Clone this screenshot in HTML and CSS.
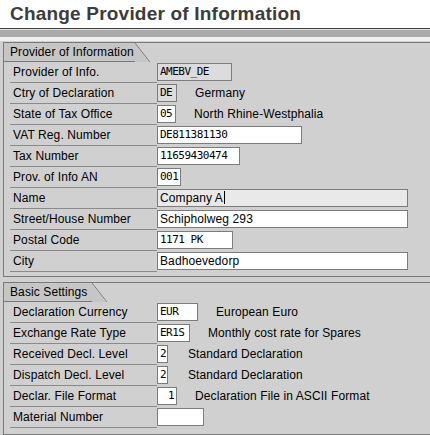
FILE: index.html
```html
<!DOCTYPE html>
<html lang="en">
<head>
  <meta charset="UTF-8">
  <title>Change Provider of Information</title>
  <link rel="stylesheet" href="styles.css">
</head>
<body>
  <div class="title">Change Provider of Information</div>
  <div class="toolbar"></div>
  <div class="screen">
    <div class="group">
      <div class="tab"><span class="tab-text t1">Provider of Information</span><span class="tab-slant"></span></div>
      <div class="row"><span class="lbl">Provider of Info.</span><span class="fld mono dis w75">AMEBV_DE</span></div>
      <div class="row"><span class="lbl">Ctry of Declaration</span><span class="fld mono dis w20">DE</span><span class="desc">Germany</span></div>
      <div class="row"><span class="lbl">State of Tax Office</span><span class="fld mono w19">05</span><span class="desc">North Rhine-Westphalia</span></div>
      <div class="row"><span class="lbl">VAT Reg. Number</span><span class="fld mono w145">DE811381130</span></div>
      <div class="row"><span class="lbl">Tax Number</span><span class="fld mono w83">11659430474</span></div>
      <div class="row"><span class="lbl">Prov. of Info AN</span><span class="fld mono w24">001</span></div>
      <div class="row"><span class="lbl">Name</span><span class="fld focus w251">Company A<span class="caret"></span></span></div>
      <div class="row"><span class="lbl">Street/House Number</span><span class="fld w251">Schipholweg 293</span></div>
      <div class="row"><span class="lbl">Postal Code</span><span class="fld mono w76">1171 PK</span></div>
      <div class="row"><span class="lbl">City</span><span class="fld w251">Badhoevedorp</span></div>
    </div>
    <div class="group second">
      <div class="tab"><span class="tab-text t2">Basic Settings</span><span class="tab-slant"></span></div>
      <div class="row"><span class="lbl">Declaration Currency</span><span class="fld mono w41">EUR</span><span class="desc">European Euro</span></div>
      <div class="row"><span class="lbl">Exchange Rate Type</span><span class="fld mono w33">ER1S</span><span class="desc">Monthly cost rate for Spares</span></div>
      <div class="row"><span class="lbl">Received Decl. Level</span><span class="fld mono w11">2</span><span class="desc wide">Standard Declaration</span></div>
      <div class="row"><span class="lbl">Dispatch Decl. Level</span><span class="fld mono w11">2</span><span class="desc wide">Standard Declaration</span></div>
      <div class="row"><span class="lbl">Declar. File Format</span><span class="fld mono w20 right">1</span><span class="desc">Declaration File in ASCII Format</span></div>
      <div class="row"><span class="lbl">Material Number</span><span class="fld mono w47"></span></div>
    </div>
  </div>
</body>
</html>
```

FILE: styles.css
```css
body {
  margin: 0;
  font-family: "Liberation Sans", Arial, sans-serif;
  font-size: 12px;
  letter-spacing: 0.1px;
  color: #000;
  background: #fff;
  overflow: hidden;
}
.title {
  height: 29px;
  box-sizing: border-box;
  padding: 1px 0 0 10px;
  line-height: 26px;
  font-size: 19px;
  font-weight: bold;
  letter-spacing: 0.2px;
  color: #3c3c3c;
  border-bottom: 1px solid #404040;
}
.toolbar {
  height: 7px;
  background: #a9a9a9;
  border-top: 1px solid #e2e2e2;
  border-bottom: 4px solid #efefef;
}
.screen {
  background: #d0d0d0;
  padding: 1px 0 0 3px;
  height: 400px;
}
.group {
  margin-right: -20px;
  border: 1px solid #7a7a7a;
  padding-bottom: 4px;
}
.group.second { margin-top: 5px; padding-bottom: 6px; }
.tab {
  display: flex;
  height: 19px;
}
.tab-text {
  box-sizing: border-box;
  background: #c6c6c6;
  border-bottom: 1px solid #7a7a7a;
  padding-left: 6px;
  line-height: 18px;
}
.t1 { width: 131px; }
.t2 { width: 88px; }
.tab-slant {
  width: 15px;
  background: linear-gradient(to top right, #c6c6c6 calc(50% - 0.7px), #7a7a7a 50%, #d0d0d0 calc(50% + 0.7px));
}
.row {
  display: flex;
  height: 21px;
}
.lbl {
  box-sizing: border-box;
  width: 147px;
  margin-left: 6px;
  padding-left: 3px;
  line-height: 20px;
  border-bottom: 1px solid #8a8a8a;
  white-space: nowrap;
}
.fld {
  box-sizing: border-box;
  height: 18px;
  margin-top: 1px;
  padding: 0 2px;
  border: 1px solid #7c7c7c;
  background: #fff;
  line-height: 16px;
  white-space: nowrap;
  overflow: hidden;
}
.mono {
  font-family: "DejaVu Sans Mono", "Liberation Mono", monospace;
  font-size: 11px;
  letter-spacing: -0.5px;
}
.dis { background: #dcdcdc; }
.focus { background: #e9e9e9; }
.right { text-align: right; }
.caret {
  display: inline-block;
  width: 1px;
  height: 13px;
  margin-left: 1px;
  vertical-align: -2px;
  background: #000;
}
.desc {
  margin-left: 18px;
  line-height: 21px;
  white-space: nowrap;
}
.desc.wide { margin-left: 20px; }
.w11 { width: 11px; }
.w19 { width: 19px; }
.w20 { width: 20px; }
.w24 { width: 24px; }
.w33 { width: 33px; }
.w41 { width: 41px; }
.w47 { width: 47px; }
.w75 { width: 75px; }
.w76 { width: 76px; }
.w83 { width: 83px; }
.w145 { width: 145px; }
.w251 { width: 251px; }
```
